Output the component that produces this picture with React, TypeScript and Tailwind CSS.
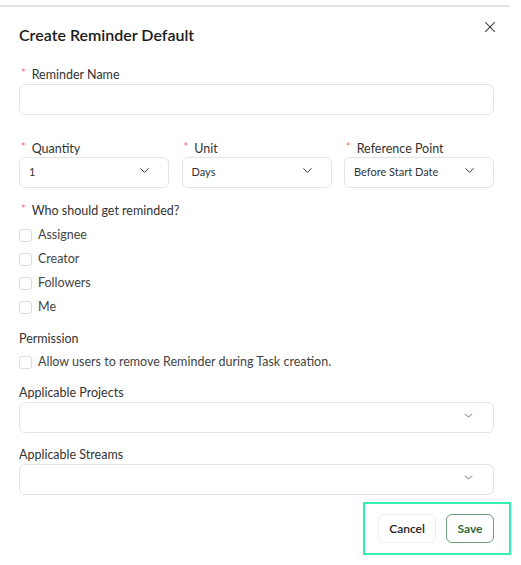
import { X, ChevronDown } from "lucide-react";

const font = { fontFamily: "Lato, 'Noto Sans', sans-serif" };

function Label({ text, required }: { text: string; required?: boolean }) {
  return (
    <div className="flex items-center h-[18px] pt-[2px] text-[12.5px] text-[#333] leading-[16px]">
      {required && <span className="text-[#f26b6b] text-[11px] mr-[6px] -mt-[4px] ml-[2px]">*</span>}
      <span>{text}</span>
    </div>
  );
}

function Select({ value, small }: { value?: string; small?: boolean }) {
  return (
    <div className="h-[31px] rounded-[6px] border border-[#e4e4e4] bg-white flex items-center justify-between pl-[9px] pr-[16px]">
      <span className="text-[11px] text-[#333]">{value}</span>
      {small ? (
        <ChevronDown size={13} strokeWidth={1.5} className="text-[#555] -mt-[4px] mr-[2px]" />
      ) : (
        <ChevronDown size={15} strokeWidth={1.6} className="text-[#333] -mt-[5px]" />
      )}
    </div>
  );
}

function Check({ text }: { text: string }) {
  return (
    <label className="flex items-center h-[24px] gap-[6px] text-[12.5px] text-[#444]">
      <span className="w-[13px] h-[13px] rounded-[3px] border border-[#dcdcdc] bg-white" />
      <span>{text}</span>
    </label>
  );
}

export default function App() {
  return (
    <div className="w-[521px] h-[565px] bg-white overflow-hidden" style={font}>
      <div className="mt-[5px] h-[2px] w-[510px] bg-[#e2e2e2]" />

      <div className="px-[19px] w-[513px]">
        <div className="flex items-start justify-between">
          <h2 className="pt-[18px] text-[16px] leading-[20px] font-semibold text-[#1b1b1b]">
            Create Reminder Default
          </h2>
          <X size={18} strokeWidth={1.4} className="mt-[11px] -mr-[5px] text-[#222]" />
        </div>

        <div className="mt-[20px]">
          <Label text="Reminder Name" required />
          <div className="mt-px h-[31px] rounded-[6px] border border-[#e4e4e4]" />
        </div>

        <div className="mt-[24px] grid grid-cols-3 gap-x-[12.5px]">
          <div>
            <Label text="Quantity" required />
            <Select value="1" />
          </div>
          <div>
            <Label text="Unit" required />
            <Select value="Days" />
          </div>
          <div>
            <Label text="Reference Point" required />
            <Select value="Before Start Date" />
          </div>
        </div>

        <div className="mt-[13px]">
          <Label text="Who should get reminded?" required />
          <div className="mt-[4px]">
            {["Assignee", "Creator", "Followers", "Me"].map((t) => (
              <Check key={t} text={t} />
            ))}
          </div>
        </div>

        <div className="mt-[10px]">
          <Label text="Permission" />
          <div className="mt-[3px]">
            <Check text="Allow users to remove Reminder during Task creation." />
          </div>
        </div>

        <div className="mt-[9px]">
          <Label text="Applicable Projects" />
          <div className="mt-px">
            <Select small />
          </div>
        </div>

        <div className="mt-[12px]">
          <Label text="Applicable Streams" />
          <div className="mt-px">
            <Select small />
          </div>
        </div>

        <div className="mt-[7px] flex justify-end -mr-[17px]">
          <div className="border-[2px] border-[#33f0ad] pl-[13px] pr-[15px] py-[10px] flex gap-[10px]">
            <button className="h-[29px] w-[58px] rounded-[6px] border border-[#ededed] bg-white text-[12px] font-semibold text-[#222]">
              Cancel
            </button>
            <button className="h-[29px] w-[48px] rounded-[6px] border border-[#6f9f7c] bg-white text-[12px] font-bold text-[#2d6a3c]">
              Save
            </button>
          </div>
        </div>
      </div>
    </div>
  );
}
